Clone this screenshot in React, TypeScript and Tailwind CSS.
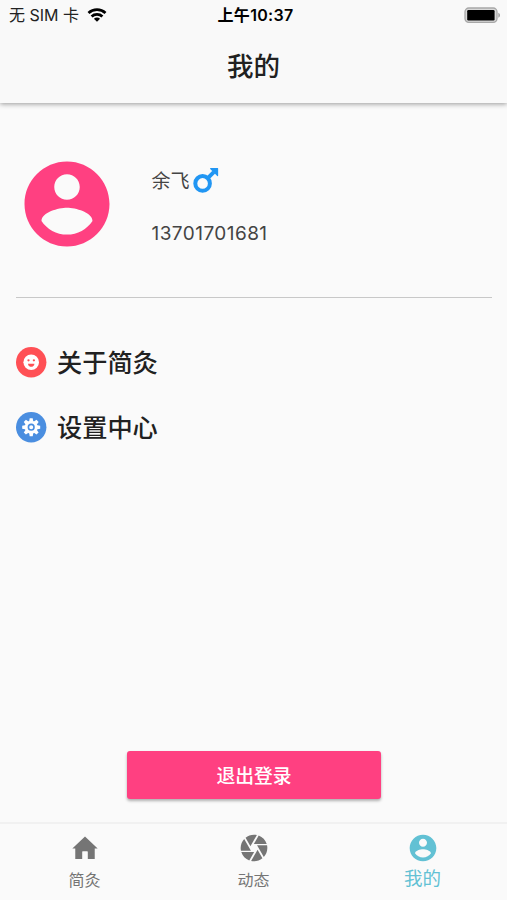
import type { ReactNode } from 'react'

// ── Icons ──────────────────────────────────────────────────────────────────────

const ACCOUNT_PATH =
  'M12 2C6.48 2 2 6.48 2 12s4.48 10 10 10 10-4.48 10-10S17.52 2 12 2zm0 3c1.66 0 3 1.34 3 3s-1.34 3-3 3-3-1.34-3-3 1.34-3 3-3zm0 14.2c-2.5 0-4.71-1.28-6-3.22.03-1.99 4-3.08 6-3.08 1.99 0 5.97 1.09 6 3.08-1.29 1.94-3.5 3.22-6 3.22z'
const HOME_PATH = 'M9.9 20.3v-5.4q0-.5.5-.5h3.2q.5 0 .5.5v5.4h5.2v-8h2.2L12 3.3 2.5 12.3h2.2v8z'
const CAMERA_PATH =
  'M9.4 10.5l4.77-8.26C13.47 2.09 12.75 2 12 2c-2.4 0-4.6.85-6.32 2.25l3.66 6.35.06-.1zM21.54 9c-.92-2.92-3.15-5.26-6-6.34L11.88 9h9.66zm.26 1h-7.49l.29.5 4.76 8.25C21 16.97 22 14.61 22 12c0-.69-.07-1.35-.2-2zM8.54 12l-3.9-6.75C3.01 7.03 2 9.39 2 12c0 .69.07 1.35.2 2h7.49l-1.15-2zm-6.08 3c.92 2.92 3.15 5.26 6 6.34L12.12 15H2.46zm11.27 0l-3.9 6.76c.7.15 1.42.24 2.17.24 2.4 0 4.6-.85 6.32-2.25l-3.66-6.35-.93 1.6z'

function MaterialIcon({ path, className }: { path: string; className: string }) {
  return (
    <svg viewBox="0 0 24 24" fill="currentColor" className={className}>
      <path d={path} />
    </svg>
  )
}

function WifiIcon() {
  return (
    <svg viewBox="0 0 20 14" className="w-5 h-3.5" fill="none" stroke="#000" strokeWidth="2.8">
      <path d="M1.5 5C6.3.6 13.7.6 18.5 5" />
      <path d="M4.6 8.5c3-2.8 7.8-2.8 10.8 0" />
      <path d="M10 13.7l-3.1-3c1.7-1.5 4.5-1.5 6.2 0z" fill="#000" stroke="none" />
    </svg>
  )
}

function BatteryIcon() {
  return (
    <svg viewBox="0 0 37 17" className="w-[37px] h-[17px]">
      <rect x="1" y="1" width="32" height="14.4" rx="3.8" fill="#d8d8d8" stroke="#a8a8a8" strokeWidth="1.3" />
      <rect x="3.2" y="3" width="27.4" height="10.4" rx="1.2" fill="#000" />
      <path d="M34.4 5.7c2 .8 2 4.2 0 5z" fill="#999" />
    </svg>
  )
}

function MaleIcon() {
  return (
    <svg viewBox="0 0 26 26" className="w-[26px] h-[26px]" fill="none" stroke="#2196f3">
      <circle cx="9.6" cy="15.4" r="7.3" strokeWidth="4" />
      <path d="M14.8 10.2l6-6" strokeWidth="4" />
      <path d="M17.6.6h7v7z" fill="#2196f3" stroke="#2196f3" strokeWidth="1.1" strokeLinejoin="round" />
    </svg>
  )
}

function SmileIcon() {
  return (
    <svg viewBox="0 0 31 31" className="w-[31px] h-[31px]">
      <circle cx="15.2" cy="15.2" r="15.2" fill="#ff5055" />
      <circle cx="15.2" cy="15.2" r="7.8" fill="#fff" />
      <circle cx="12.5" cy="13.3" r="1.15" fill="#ff5055" />
      <circle cx="17.9" cy="13.3" r="1.15" fill="#ff5055" />
      <path d="M12 16.7h6.4c-.2 4.2-6.2 4.2-6.4 0z" fill="#ff5055" />
    </svg>
  )
}

function GearIcon() {
  return (
    <svg viewBox="0 0 31 31" className="w-[31px] h-[31px]">
      <circle cx="15.2" cy="15.2" r="15.2" fill="#4a8ee0" />
      <g fill="#fff">
        {[0, 45, 90, 135, 180, 225, 270, 315].map((angle) => (
          <path key={angle} d="M13 10.2l.7-4h3l.7 4z" transform={`rotate(${angle} 15.2 15.2)`} />
        ))}
        <circle cx="15.2" cy="15.2" r="6.4" />
      </g>
      <circle cx="15.2" cy="15.2" r="2.8" fill="#fff" stroke="#4a8ee0" strokeWidth="1.6" />
    </svg>
  )
}

// ── Rows ───────────────────────────────────────────────────────────────────────

function MenuRow({ icon, label }: { icon: ReactNode; label: string }) {
  return (
    <button className="flex items-center h-[65px] gap-2.5 text-left">
      {icon}
      <span className="pt-0.5 text-[25.2px] leading-none font-medium text-[#212121]">{label}</span>
    </button>
  )
}

const TABS = [
  { label: '简灸', path: HOME_PATH, active: false },
  { label: '动态', path: CAMERA_PATH, active: false },
  { label: '我的', path: ACCOUNT_PATH, active: true },
]

export default function App() {
  return (
    <div className="flex flex-col w-full h-[900px] overflow-hidden bg-[#fafafa] text-[#212121] font-[Inter,'Noto_Sans_CJK_SC',sans-serif]">
      {/* Header */}
      <header className="h-[103px] shrink-0 bg-[#f9f9f9] shadow-[0_1px_5px_rgba(0,0,0,0.4)]">
        <div className="grid grid-cols-3 items-center h-[30px] pl-[9px] pr-1.5 text-black">
          <div className="flex items-center gap-2">
            <span className="text-[16px] leading-none text-[#222] whitespace-nowrap">无 SIM 卡</span>
            <WifiIcon />
          </div>
          <span className="pl-px text-[16px] leading-none font-semibold tracking-[0.3px] text-center">上午10:37</span>
          <div className="flex justify-end">
            <BatteryIcon />
          </div>
        </div>
        <h1 className="h-[72px] flex items-center justify-center text-[26.5px] leading-none font-medium">
          我的
        </h1>
      </header>

      {/* Profile */}
      <main className="flex flex-col flex-1 pl-4 pr-[15px]">
        <section className="flex items-center h-[195px] pt-2 border-b border-[#c8c8c8]">
          <MaterialIcon path={ACCOUNT_PATH} className="w-[102px] h-[102px] text-[#ff4081]" />
          <div className="flex flex-col ml-[33.5px] pt-[3px] gap-[30px] text-[#444]">
            <div className="flex items-center gap-[3px] h-[26px]">
              <span className="pt-px text-[19px] leading-none">余飞</span>
              <MaleIcon />
            </div>
            <span className="text-[19px] leading-none tracking-[0.45px]">13701701681</span>
          </div>
        </section>

        <nav className="flex flex-col pt-8">
          <MenuRow icon={<SmileIcon />} label="关于简灸" />
          <MenuRow icon={<GearIcon />} label="设置中心" />
        </nav>

        <button className="mt-auto mb-[23px] self-center w-[254px] h-12 pt-[5px] pb-px rounded-[3px] bg-[#ff4081] text-white text-[18.8px] leading-none font-medium shadow-[0_2px_3px_rgba(0,0,0,0.3)]">
          退出登录
        </button>
      </main>

      {/* Bottom tabs */}
      <footer className="grid grid-cols-3 h-[78px] shrink-0 border-t-2 border-[#f1f1f1]">
        {TABS.map((tab) => (
          <button
            key={tab.label}
            className={
              tab.active
                ? 'flex flex-col items-center pt-2 gap-[5px] text-[#62c1d4] text-[18.5px] leading-none'
                : 'flex flex-col items-center pt-2 gap-2 text-[#757575] text-[16px] leading-none'
            }
          >
            <MaterialIcon path={tab.path} className="w-8 h-8" />
            {tab.label}
          </button>
        ))}
      </footer>
    </div>
  )
}
